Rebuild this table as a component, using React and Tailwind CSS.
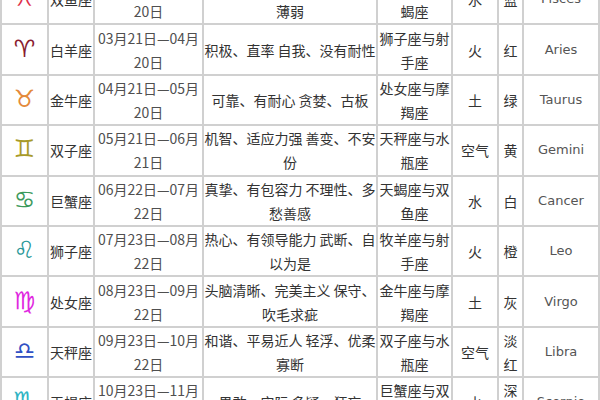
import React from 'react';

const rows = [
  { sym: '♓', color: 'text-[#e0304a]', name: '双鱼座', date: ['02月19日—03月', '20日'], trait: ['善良、多情 敏感、意志力', '薄弱'], match: ['巨蟹座与天', '蝎座'], el: '水', col: ['蓝'], en: 'Pisces' },
  { sym: '♈', color: 'text-[#8a1c30]', name: '白羊座', date: ['03月21日—04月', '20日'], trait: ['积极、直率 自我、没有耐性'], match: ['狮子座与射', '手座'], el: '火', col: ['红'], en: 'Aries' },
  { sym: '♉', color: 'text-[#e48a3a]', name: '金牛座', date: ['04月21日—05月', '20日'], trait: ['可靠、有耐心 贪婪、古板'], match: ['处女座与摩', '羯座'], el: '土', col: ['绿'], en: 'Taurus' },
  { sym: '♊', color: 'text-[#a89a28]', name: '双子座', date: ['05月21日—06月', '21日'], trait: ['机智、适应力强 善变、不安', '份'], match: ['天秤座与水', '瓶座'], el: '空气', col: ['黄'], en: 'Gemini' },
  { sym: '♋', color: 'text-[#3c9a5c]', name: '巨蟹座', date: ['06月22日—07月', '22日'], trait: ['真挚、有包容力 不理性、多', '愁善感'], match: ['天蝎座与双', '鱼座'], el: '水', col: ['白'], en: 'Cancer' },
  { sym: '♌', color: 'text-[#2a9898]', name: '狮子座', date: ['07月23日—08月', '22日'], trait: ['热心、有领导能力 武断、自', '以为是'], match: ['牧羊座与射', '手座'], el: '火', col: ['橙'], en: 'Leo' },
  { sym: '♍', color: 'text-[#e028e0]', name: '处女座', date: ['08月23日—09月', '22日'], trait: ['头脑清晰、完美主义 保守、', '吹毛求疵'], match: ['金牛座与摩', '羯座'], el: '土', col: ['灰'], en: 'Virgo' },
  { sym: '♎', color: 'text-[#3050c4]', name: '天秤座', date: ['09月23日—10月', '22日'], trait: ['和谐、平易近人 轻浮、优柔', '寡断'], match: ['双子座与水', '瓶座'], el: '空气', col: ['淡', '红'], en: 'Libra' },
  { sym: '♏', color: 'text-[#30b4c4]', name: '天蝎座', date: ['10月23日—11月', '22日'], trait: ['果敢、实际 多疑、狂妄'], match: ['巨蟹座与双', '鱼座'], el: '水', col: ['深', '红'], en: 'Scorpio' },
];

const Lines = ({ items }) => (
  <>
    {items.map((t, i) => (
      <div key={i} className="whitespace-nowrap">{t}</div>
    ))}
  </>
);

const cell = 'border-2 border-[#d0d0d0] text-center align-middle p-0';

export default function App() {
  return (
    <div className="w-[600px] h-[400px] overflow-hidden bg-white">
      <table
        className="-mt-[27px] w-[598px] table-fixed border-collapse text-[14px] leading-[24px] text-[#333]"
        style={{ fontFamily: '"Noto Sans CJK SC", "DejaVu Sans", sans-serif' }}
      >
        <colgroup>
          <col className="w-[47px]" />
          <col className="w-[46px]" />
          <col className="w-[109px]" />
          <col className="w-[174px]" />
          <col className="w-[75px]" />
          <col className="w-[46px]" />
          <col className="w-[25px]" />
          <col className="w-[76px]" />
        </colgroup>
        <tbody>
          {rows.map((r) => (
            <tr key={r.en} className="h-[50.4px]">
              <td className={cell}>
                <span
                  className={`text-[24px] leading-none ${r.color}`}
                  style={{ fontFamily: '"DejaVu Sans", sans-serif' }}
                >
                  {r.sym + '\uFE0E'}
                </span>
              </td>
              <td className={cell}>{r.name}</td>
              <td className={`${cell} text-[#4f4f4f]`}><Lines items={r.date} /></td>
              <td className={cell}><Lines items={r.trait} /></td>
              <td className={cell}><Lines items={r.match} /></td>
              <td className={cell}>{r.el}</td>
              <td className={cell}><Lines items={r.col} /></td>
              <td
                className={`${cell} text-[13px] text-[#555]`}
                style={{ fontFamily: '"DejaVu Sans", sans-serif' }}
              >
                {r.en}
              </td>
            </tr>
          ))}
        </tbody>
      </table>
    </div>
  );
}
